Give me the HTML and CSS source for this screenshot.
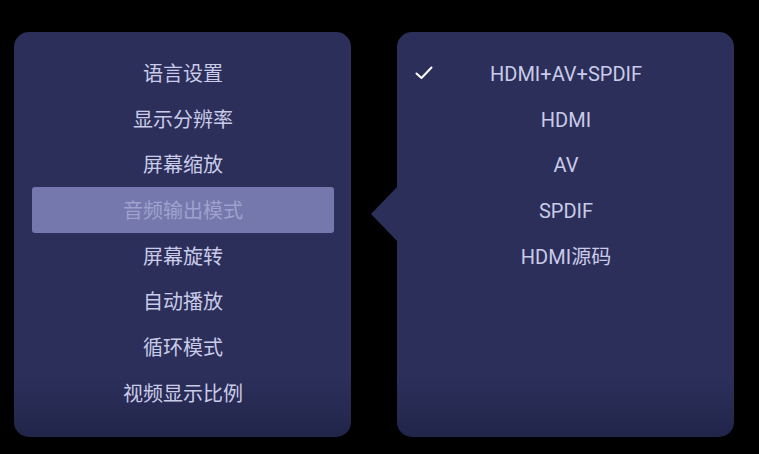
FILE: index.html
```html
<!DOCTYPE html>
<html lang="zh-CN">

<head>
    <meta charset="utf-8">
    <meta name="viewport" content="width=device-width, initial-scale=1.0">
    <title>设置</title>
    <link rel="stylesheet" href="styles.css">
</head>

<body>
    <main class="scene">
        <section class="panel">
            <ul class="menu">
                <li class="item">语言设置</li>
                <li class="item">显示分辨率</li>
                <li class="item">屏幕缩放</li>
                <li class="item valgt">音频输出模式</li>
                <li class="item">屏幕旋转</li>
                <li class="item">自动播放</li>
                <li class="item">循环模式</li>
                <li class="item">视频显示比例</li>
            </ul>
        </section>

        <section class="panel sub">
            <ul class="menu">
                <li class="item checked">
                    <svg class="check" width="18" height="14" viewBox="0 0 18 14" aria-hidden="true">
                        <path d="M1.5 7.5 L6.5 12 L16.5 1.5" fill="none" stroke="#ffffff" stroke-width="2" stroke-linecap="round" stroke-linejoin="round"/>
                    </svg>
                    HDMI+AV+SPDIF
                </li>
                <li class="item">HDMI</li>
                <li class="item">AV</li>
                <li class="item">SPDIF</li>
                <li class="item">HDMI源码</li>
            </ul>
        </section>
    </main>
</body>

</html>
```

FILE: styles.css
```css
html,
body {
    margin: 0;
    height: 100%;
    background: #000;
}

body {
    font-family: Roboto, "Noto Sans CJK SC", sans-serif;
    color: #c9cbe8;
}

.scene {
    display: flex;
    gap: 46px;
    padding: 32px 0 0 14px;
}

.panel {
    position: relative;
    width: 337px;
    height: 405px;
    border-radius: 15px;
    background: linear-gradient(#2c2f5a 0%, #2c2f5a 85%, #22254a 100%);
}

/* little arrow pointing back to the left menu */
.sub::before {
    content: "";
    position: absolute;
    left: -26px;
    top: 155px;
    border-top: 27px solid transparent;
    border-bottom: 27px solid transparent;
    border-right: 26px solid #2c2f5a;
}

.menu {
    list-style: none;
    margin: 0;
    padding: 18px 17px 0 18px;
}

.item {
    position: relative;
    height: 45.7px;
    line-height: 45.7px;
    padding-top: 2px;
    box-sizing: border-box;
    text-align: center;
    font-size: 20px;
    border-radius: 3px;
}

.valgt {
    background: #7478ac;
    color: #9ea2cc;
}

.check {
    position: absolute;
    left: 0;
    top: 16px;
}
```
